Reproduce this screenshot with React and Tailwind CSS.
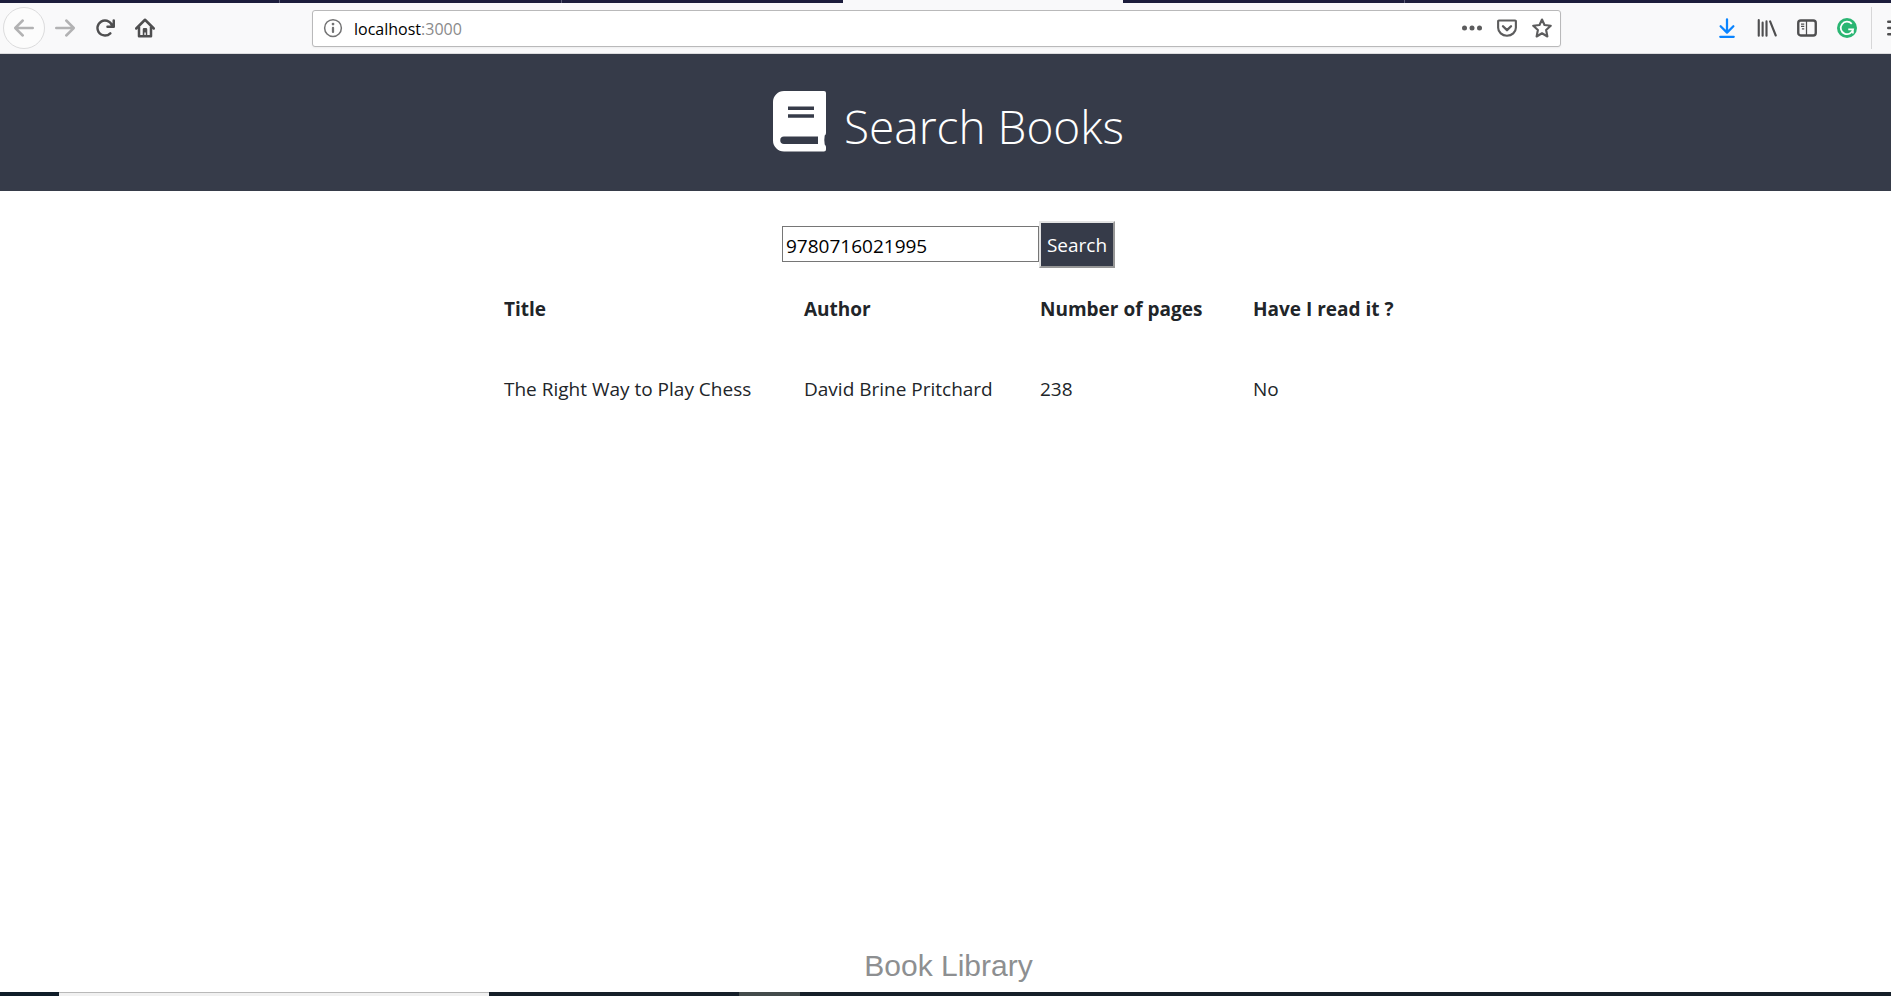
import React from "react";

const books = [
  {
    title: "The Right Way to Play Chess",
    author: "David Brine Pritchard",
    pages: 238,
    read: "No",
  },
];

function Icon({ children, className = "" }) {
  return (
    <svg viewBox="0 0 16 16" aria-hidden="true" className={`size-5 shrink-0 ${className}`} fill="currentColor">
      {children}
    </svg>
  );
}

function BookIcon() {
  return (
    <svg viewBox="0 0 53 61" aria-hidden="true" className="h-[61px] w-[53px]" fill="currentColor">
      <path
        fillRule="evenodd"
        d="M11 0H51a2 2 0 0 1 2 2V42q0 1.500-1.300 2.500q-.8 4.500 0 9q1.300 1 1.300 2.500V58.500a2 2 0 0 1-2 2H11A11 11 0 0 1 0 49.500V11A11 11 0 0 1 11 0ZM15 15.500V19H41V15.500ZM15 23.300V26.800H41V23.300ZM11 45.500a3.750 3.750 0 0 0 0 7.500H45V45.500Z"
      />
    </svg>
  );
}

function TabStrip() {
  return (
    <div className="flex h-[3px] bg-[#1c1d3c]">
      <div className="w-[280px] border-r border-[#5a5b75]" />
      <div className="w-[282px] border-r border-[#5a5b75]" />
      <div className="w-[281px]" />
      <div className="w-[280px] bg-[#f9f9fa]" />
      <div className="w-[282px] border-r border-[#5a5b75]" />
    </div>
  );
}

function Toolbar() {
  return (
    <div className="flex h-[51px] items-center border-b border-[#dcdcde] bg-[#f9f9fa] text-[#4f4f50]">
      <button type="button" aria-label="Back" className="ml-[3px] flex size-[42px] items-center justify-center rounded-full border border-[#dcdcdd] bg-[#fcfcfc] text-[#b2b2b3]">
        <Icon>
          <path d="M15 7H3.414l4.293-4.293a1 1 0 0 0-1.414-1.414l-6 6a1 1 0 0 0 0 1.414l6 6a1 1 0 0 0 1.414-1.414L3.414 9H15a1 1 0 0 0 0-2z" />
        </Icon>
      </button>
      <button type="button" aria-label="Forward" className="ml-[10px] text-[#b2b2b3]">
        <Icon>
          <path d="M1 7h11.586L8.293 2.707a1 1 0 0 1 1.414-1.414l6 6a1 1 0 0 1 0 1.414l-6 6a1 1 0 0 1-1.414-1.414L12.586 9H1a1 1 0 0 1 0-2z" />
        </Icon>
      </button>
      <button type="button" aria-label="Reload" className="ml-5">
        <Icon>
          <path d="M15 1a1 1 0 0 0-1 1v2.418A6.995 6.995 0 1 0 8 15a6.954 6.954 0 0 0 4.95-2.05 1 1 0 0 0-1.414-1.414A5.019 5.019 0 1 1 12.549 6H10a1 1 0 0 0 0 2h5a1 1 0 0 0 1-1V2a1 1 0 0 0-1-1z" />
        </Icon>
      </button>
      <button type="button" aria-label="Home" className="ml-5">
        <Icon>
          <path d="M1 8.400 8 1.400l7 7" fill="none" stroke="currentColor" strokeWidth="2" strokeLinecap="round" strokeLinejoin="round" />
          <path d="M3.200 7v7.600h9.600V7" fill="none" stroke="currentColor" strokeWidth="2" strokeLinejoin="round" />
          <path d="M6.200 14V9a1 1 0 0 1 1-1h1.600a1 1 0 0 1 1 1v5H8.600v-2.500H7.500V14z" />
        </Icon>
      </button>

      <div className="ml-[157px] mr-[156px] flex h-[37px] min-w-0 flex-1 items-center rounded-[3px] border border-[#b9b9ba] bg-white pl-[10px] pr-2 text-[#5c5c5d] shadow-xs">
        <Icon className="text-[#737374]">
          <circle cx="8" cy="8" r="6.700" fill="none" stroke="currentColor" strokeWidth="1.200" />
          <circle cx="8" cy="4.800" r="1.100" />
          <rect x="7.100" y="7" width="1.800" height="5" rx=".8" />
        </Icon>
        <p className="ml-[11px] flex-1 pt-0.5 text-[16px] text-[#8a8a8b]">
          <span className="text-black">localhost</span>:3000
        </p>
        <button type="button" aria-label="Page actions">
          <Icon>
            <circle cx="2" cy="8" r="2" />
            <circle cx="8" cy="8" r="2" />
            <circle cx="14" cy="8" r="2" />
          </Icon>
        </button>
        <button type="button" aria-label="Save to Pocket" className="ml-[15px]">
          <Icon>
            <path d="M1.500 2h13a.6.6 0 0 1 .6.600v5.200a7.100 6.400 0 0 1-14.200 0V2.600a.6.6 0 0 1 .6-.6z" fill="none" stroke="currentColor" strokeWidth="1.700" />
            <path d="M4.800 6.600 8 9.700l3.200-3.100" fill="none" stroke="currentColor" strokeWidth="1.900" strokeLinecap="round" strokeLinejoin="round" />
          </Icon>
        </button>
        <button type="button" aria-label="Bookmark this page" className="ml-[15px]">
          <Icon>
            <path d="M8 1.200 10 5.600l5 .6-3.700 3.400 1 5.200L8 12.200l-4.300 2.600 1-5.200L1 6.200 6 5.600z" fill="none" stroke="currentColor" strokeWidth="1.700" strokeLinejoin="round" />
          </Icon>
        </button>
      </div>

      <button type="button" aria-label="Downloads" className="text-[#0a84ff]">
        <Icon>
          <path d="M8 1v10.500M2.900 6.600 8 11.700l5.100-5.100M2.600 15h10.800" fill="none" stroke="currentColor" strokeWidth="1.800" strokeLinecap="round" strokeLinejoin="round" />
        </Icon>
      </button>
      <button type="button" aria-label="Library" className="ml-5">
        <Icon>
          <path d="M1.400 1.700v12.500M4.500 3.700v10.500M7.600 2.700v11.500M10.500 2.700l4.500 11.300" fill="none" stroke="currentColor" strokeWidth="1.700" strokeLinecap="round" />
        </Icon>
      </button>
      <button type="button" aria-label="Sidebars" className="ml-5">
        <Icon>
          <rect x="1" y="2" width="14" height="12" rx="2" fill="none" stroke="currentColor" strokeWidth="1.900" />
          <path d="M7.600 2v12M3.200 4.800h2.600M3.200 6.700h2.600M3.900 8.600h1.900" fill="none" stroke="currentColor" strokeWidth="1" />
        </Icon>
      </button>
      <button type="button" aria-label="Grammarly" className="ml-5">
        <Icon className="text-[#2bb673]">
          <circle cx="8" cy="8" r="8" />
          <path d="M11.800 4.700A5 5 0 1 0 12.900 9H9M12.700 9v3.300" fill="none" stroke="#fff" strokeWidth="1.400" />
        </Icon>
      </button>
      <div className="ml-[14px] h-[42px] w-px bg-[#d7d7d8]" />
      <button type="button" aria-label="Open menu" className="ml-[15px] -mr-4">
        <Icon>
          <path d="M1 3h14M1 8h14M1 13h14" stroke="currentColor" strokeWidth="2" strokeLinecap="round" />
        </Icon>
      </button>
    </div>
  );
}

export default function App() {
  return (
    <div className="flex min-h-screen flex-col overflow-x-hidden bg-white font-['Open_Sans','Noto_Sans',sans-serif] text-[#212529]">
      <TabStrip />
      <Toolbar />
      <div className="-mr-1.5 flex flex-1 flex-col">
        <header className="flex items-start justify-center gap-[18px] bg-[#363b49] pt-[37px] pb-[30px] text-white">
          <BookIcon />
          <h1 className="text-[46px] font-light leading-[70px]">Search Books</h1>
        </header>
        <main className="flex flex-1 flex-col items-center pt-[30px]">
          <form className="flex items-center text-[19px]" onSubmit={(e) => e.preventDefault()}>
            <input
              aria-label="ISBN"
              defaultValue="9780716021995"
              className="mb-px h-9 w-[257px] border border-[#767676] px-[3px] pt-1 text-black"
            />
            <button type="submit" className="h-[47px] w-[76px] border-2 border-t-[#e3e3e3] border-l-[#e3e3e3] border-r-[#979797] border-b-[#979797] bg-[#363b49] pt-0.5 text-white">
              Search
            </button>
          </form>
          <table className="mt-px w-[939px] table-fixed text-left text-[19px] leading-[30px]">
            <thead>
              <tr className="whitespace-nowrap">
                <th className="w-[300px] p-[25px]">Title</th>
                <th className="w-[236px] p-[25px]">Author</th>
                <th className="w-[213px] p-[25px]">Number of pages</th>
                <th className="p-[25px]">Have I read it ?</th>
              </tr>
            </thead>
            <tbody>
              {books.map((b) => (
                <tr key={b.title} className="whitespace-nowrap">
                  <td className="p-[25px]">{b.title}</td>
                  <td className="p-[25px]">{b.author}</td>
                  <td className="p-[25px]">{b.pages}</td>
                  <td className="p-[25px]">{b.read}</td>
                </tr>
              ))}
            </tbody>
          </table>
        </main>
        <footer className="pb-2 text-center font-['Liberation_Sans',Arial,sans-serif] text-[30px] leading-9 text-[#8d8f91]">
          Book Library
        </footer>
      </div>
      <div className="flex h-1 bg-[#161f29]">
        <div className="w-[59px] bg-[#0f1d29]" />
        <div className="w-[430px] border-t border-[#b9b9b9] bg-[#f1f1f1]" />
        <div className="w-[250px]" />
        <div className="w-[61px] bg-[#434b4b]" />
      </div>
    </div>
  );
}
